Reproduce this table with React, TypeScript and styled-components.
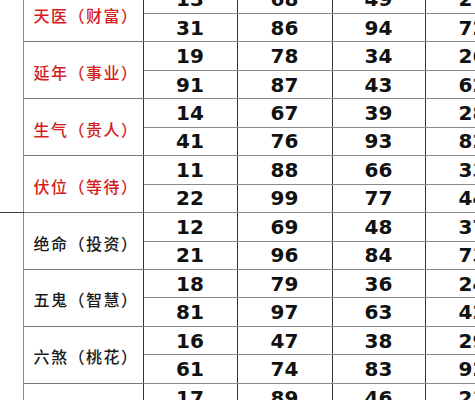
import { createGlobalStyle, styled } from 'styled-components';

const GlobalStyle = createGlobalStyle`
  html, body {
    margin: 0;
    padding: 0;
    background: #fff;
    overflow: hidden;
  }
`;

const Page = styled.div`
  width: 475px;
  height: 400px;
  overflow: hidden;
  background: #fff;
`;

const Table = styled.table`
  border-collapse: collapse;
  table-layout: fixed;
  width: 520px;
  margin-top: -15.5px;
`;

const Col = styled.col<{ $w: number }>`
  width: ${(p) => p.$w}px;
`;

const Row = styled.tr`
  height: 28.46px;
`;

const SideCell = styled.td`
  border-right: 1px solid #8a8a8a;
  border-top: 1px solid #3a3a3a;
  border-bottom: 1px solid #3a3a3a;
  padding: 0;
`;

const LabelCell = styled.td<{ $lucky: boolean }>`
  border-left: 1px solid #8a8a8a;
  border-right: 1px solid #333;
  border-top: 1px solid #777;
  border-bottom: 1px solid #777;
  padding: 3px 0 0 10px;
  text-align: left;
  font-family: 'Noto Sans CJK SC', 'Noto Sans', sans-serif;
  font-size: 16px;
  font-weight: 500;
  letter-spacing: 1.5px;
  color: ${(p) => (p.$lucky ? '#d41c22' : '#1a1a1a')};
  white-space: nowrap;
`;

const NumCell = styled.td`
  border-left: 1px solid #333;
  border-right: 1px solid #333;
  border-top: 1px solid #8a8a8a;
  border-bottom: 1px solid #8a8a8a;
  padding: 0;
  text-align: center;
  vertical-align: middle;
  font-family: 'DejaVu Sans', Verdana, sans-serif;
  font-size: 20px;
  font-weight: 700;
  color: #111;
  line-height: 1;
`;

type Group = {
  name: string;
  lucky: boolean;
  rows: string[][];
};

const colWidths = [23, 120, 94, 95, 93, 95];

const groups: Group[] = [
  { name: '天医（财富）', lucky: true, rows: [['13', '68', '49', '27'], ['31', '86', '94', '72']] },
  { name: '延年（事业）', lucky: true, rows: [['19', '78', '34', '26'], ['91', '87', '43', '62']] },
  { name: '生气（贵人）', lucky: true, rows: [['14', '67', '39', '28'], ['41', '76', '93', '82']] },
  { name: '伏位（等待）', lucky: true, rows: [['11', '88', '66', '33'], ['22', '99', '77', '44']] },
  { name: '绝命（投资）', lucky: false, rows: [['12', '69', '48', '37'], ['21', '96', '84', '73']] },
  { name: '五鬼（智慧）', lucky: false, rows: [['18', '79', '36', '24'], ['81', '97', '63', '42']] },
  { name: '六煞（桃花）', lucky: false, rows: [['16', '47', '38', '29'], ['61', '74', '83', '92']] },
  { name: '祸害（口才）', lucky: false, rows: [['17', '89', '46', '23'], ['71', '98', '64', '32']] },
];

const App = () => {
  return (
    <Page>
      <GlobalStyle />
      <Table>
        <colgroup>
          {colWidths.map((w, i) => (
            <Col key={i} $w={w} />
          ))}
        </colgroup>
        <tbody>
          {groups.map((g, gi) =>
            g.rows.map((nums, ri) => (
              <Row key={`${gi}-${ri}`}>
                {gi % 4 === 0 && ri === 0 && <SideCell rowSpan={8} />}
                {ri === 0 && (
                  <LabelCell rowSpan={2} $lucky={g.lucky}>
                    {g.name}
                  </LabelCell>
                )}
                {nums.map((n) => (
                  <NumCell key={n}>{n}</NumCell>
                ))}
              </Row>
            ))
          )}
        </tbody>
      </Table>
    </Page>
  );
};

export default App;
